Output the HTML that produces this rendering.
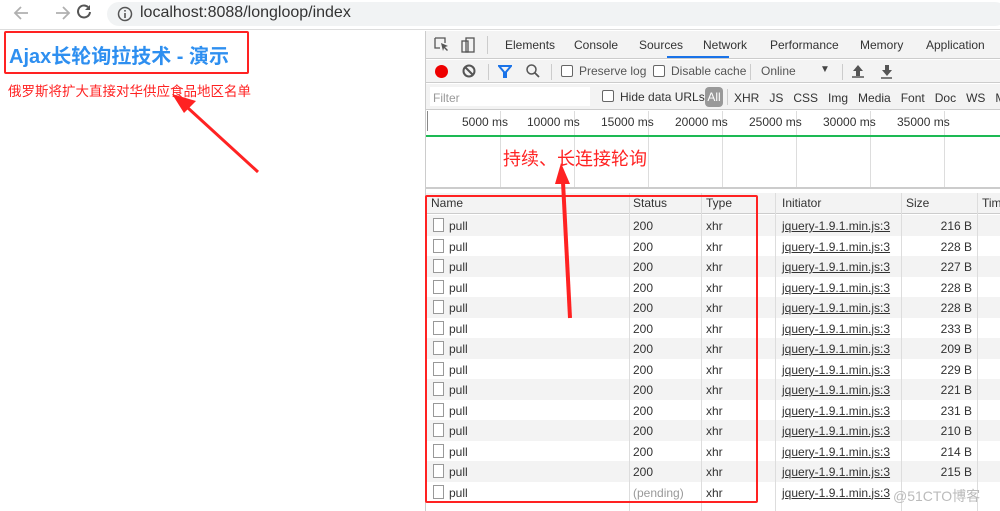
<!DOCTYPE html>
<html><head><meta charset="utf-8"><style>
*{margin:0;padding:0;box-sizing:border-box}
body{width:1000px;height:511px;overflow:hidden;background:#fff;font-family:"Liberation Sans","Noto Sans CJK SC",sans-serif;position:relative}
.a{position:absolute;white-space:nowrap}
.dt{font-size:12px;color:#333}
.row{position:absolute;left:427px;width:573px;height:20.5px;font-size:12px;color:#333}
.row.g{background:#f3f3f3}
.row span{position:absolute;top:4px}
.vl{position:absolute;width:1px;background:#ddd}
</style></head><body>
<div class="a" style="left:0;top:0;width:1000px;height:30px;background:#fff;border-bottom:1px solid #ddd"></div>
<svg class="a" style="left:12px;top:4px" width="80" height="18" viewBox="0 0 80 18">
<path d="M16 9H3M9 3L3 9l6 6" stroke="#b0b0b0" stroke-width="1.8" fill="none"/>
<path d="M44 9h13M51 3l6 6-6 6" stroke="#b0b0b0" stroke-width="1.8" fill="none"/>
<path d="M78 8a6 6 0 1 1-2-5" stroke="#555" stroke-width="2" fill="none"/><path d="M78 1v5h-5z" fill="#555"/>
</svg>
<div class="a" style="left:107px;top:2px;width:900px;height:24px;border-radius:12px;background:#f1f3f4"></div>
<svg class="a" style="left:117px;top:6px" width="16" height="16"><circle cx="8" cy="8" r="6.5" stroke="#555" stroke-width="1.5" fill="none"/><rect x="7.2" y="7" width="1.6" height="5" fill="#555"/><rect x="7.2" y="4" width="1.6" height="1.6" fill="#555"/></svg>
<div class="a" style="left:140px;top:4px;font-size:16px;color:#333">localhost:8088/longloop/index</div>

<div class="a" style="left:4px;top:31px;width:245px;height:43px;border:2px solid #f22;border-radius:2px"></div>
<div class="a" style="left:9px;top:40px;font-size:20px;font-weight:bold;color:#2e8ff0">Ajax长轮询拉技术 - 演示</div>
<div class="a" style="left:8px;top:80px;font-size:13.5px;color:#f22">俄罗斯将扩大直接对华供应食品地区名单</div>

<div class="a" style="left:425px;top:31px;width:575px;height:480px;background:#fff;border-left:1px solid #ccc"></div>
<div class="a" style="left:426px;top:31px;width:574px;height:28px;background:#f3f3f3;border-bottom:1px solid #ccc"></div>
<svg class="a" style="left:434px;top:37px" width="50" height="16"><path d="M1 1h10v5M1 1v10h5" stroke="#555" fill="none" stroke-width="1.3"/><path d="M7 6l7 3-3 1 3 3-1 1-3-3-1 3z" fill="#555"/><rect x="28" y="4" width="6" height="11" stroke="#555" fill="none" stroke-width="1.3"/><rect x="32" y="1" width="8" height="14" stroke="#555" fill="none" stroke-width="1.3"/></svg>
<div class="vl" style="left:487px;top:36px;height:18px;background:#ccc"></div>
<div class="a dt" style="left:505px;top:38px">Elements</div>
<div class="a dt" style="left:574px;top:38px">Console</div>
<div class="a dt" style="left:639px;top:38px">Sources</div>
<div class="a dt" style="left:703px;top:38px">Network</div>
<div class="a" style="left:667px;top:56px;width:62px;height:2px;background:#1a73e8"></div>
<div class="a dt" style="left:770px;top:38px">Performance</div>
<div class="a dt" style="left:860px;top:38px">Memory</div>
<div class="a dt" style="left:926px;top:38px">Application</div>

<div class="a" style="left:426px;top:60px;width:574px;height:23px;background:#f3f3f3;border-bottom:1px solid #ccc"></div>
<div class="a" style="left:435px;top:65px;width:13px;height:13px;border-radius:50%;background:#e00"></div>
<svg class="a" style="left:462px;top:64px" width="14" height="14"><circle cx="7" cy="7" r="5.5" stroke="#555" stroke-width="2" fill="none"/><path d="M3 3l8 8" stroke="#555" stroke-width="2"/></svg>
<div class="vl" style="left:488px;top:64px;height:16px;background:#ccc"></div>
<svg class="a" style="left:498px;top:65px" width="14" height="13"><path d="M1 1h12L8 7v5H6V7z" stroke="#1a73e8" stroke-width="2" fill="none"/></svg>
<svg class="a" style="left:526px;top:64px" width="14" height="14"><circle cx="5.5" cy="5.5" r="4.5" stroke="#555" stroke-width="1.5" fill="none"/><path d="M9 9l4 4" stroke="#555" stroke-width="1.8"/></svg>
<div class="vl" style="left:551px;top:64px;height:16px;background:#ccc"></div>
<div class="a" style="left:561px;top:65px;width:12px;height:12px;border:1px solid #666;border-radius:2px;background:#fff"></div>
<div class="a dt" style="left:579px;top:64px;color:#555">Preserve log</div>
<div class="a" style="left:653px;top:65px;width:12px;height:12px;border:1px solid #666;border-radius:2px;background:#fff"></div>
<div class="a dt" style="left:671px;top:64px;color:#555">Disable cache</div>
<div class="vl" style="left:750px;top:64px;height:16px;background:#ccc"></div>
<div class="a dt" style="left:761px;top:64px;color:#555">Online</div>
<div class="a" style="left:820px;top:64px;font-size:10px;color:#444">▼</div>
<div class="vl" style="left:842px;top:64px;height:16px;background:#ccc"></div>
<svg class="a" style="left:852px;top:63px" width="40" height="16"><path d="M6 2l-5 6h3v5h4V8h3z" fill="#555"/><path d="M0 14h12" stroke="#555" stroke-width="1.5"/><path d="M33 2v5h-3l5 6 5-6h-3V2z" fill="#555"/><path d="M29 15h12" stroke="#555" stroke-width="1.5"/></svg>

<div class="a" style="left:426px;top:84px;width:574px;height:26px;background:#f3f3f3;border-bottom:1px solid #ccc"></div>
<div class="a" style="left:430px;top:87px;width:160px;height:19px;background:#fff"></div>
<div class="a dt" style="left:433px;top:91px;color:#999">Filter</div>
<div class="a" style="left:602px;top:90px;width:12px;height:12px;border:1px solid #666;border-radius:2px;background:#fff"></div>
<div class="a dt" style="left:620px;top:90px">Hide data URLs</div>
<div class="a" style="left:705px;top:87px;width:18px;height:20px;border-radius:4px;background:#999;color:#fff;font-size:12px;text-align:center;line-height:20px">All</div>
<div class="vl" style="left:727px;top:89px;height:16px;background:#ccc"></div>
<div class="a dt" style="left:734px;top:91px">XHR&nbsp;&nbsp; JS&nbsp;&nbsp; CSS&nbsp;&nbsp; Img&nbsp;&nbsp; Media&nbsp;&nbsp; Font&nbsp;&nbsp; Doc&nbsp;&nbsp; WS&nbsp;&nbsp; Man</div>

<div class="vl" style="left:427px;top:111px;height:20px;background:#888"></div>
<div class="vl" style="left:500px;top:111px;height:77px"></div>
<div class="vl" style="left:574px;top:111px;height:77px"></div>
<div class="vl" style="left:648px;top:111px;height:77px"></div>
<div class="vl" style="left:722px;top:111px;height:77px"></div>
<div class="vl" style="left:796px;top:111px;height:77px"></div>
<div class="vl" style="left:870px;top:111px;height:77px"></div>
<div class="vl" style="left:944px;top:111px;height:77px"></div>
<div class="a dt" style="left:462px;top:115px">5000 ms</div>
<div class="a dt" style="left:527px;top:115px">10000 ms</div>
<div class="a dt" style="left:601px;top:115px">15000 ms</div>
<div class="a dt" style="left:675px;top:115px">20000 ms</div>
<div class="a dt" style="left:749px;top:115px">25000 ms</div>
<div class="a dt" style="left:823px;top:115px">30000 ms</div>
<div class="a dt" style="left:897px;top:115px">35000 ms</div>
<div class="a" style="left:426px;top:135px;width:574px;height:2px;background:#1db954"></div>
<div class="a" style="left:426px;top:187px;width:574px;height:2px;background:#ccc"></div>
<div class="a" style="left:503px;top:145px;font-size:18px;color:#f22">持续、长连接轮询</div>

<div class="a" style="left:426px;top:193px;width:574px;height:21px;background:#f3f3f3;border-bottom:1px solid #ccc"></div>
<div class="a dt" style="left:431px;top:196px">Name</div>
<div class="a dt" style="left:633px;top:196px">Status</div>
<div class="a dt" style="left:706px;top:196px">Type</div>
<div class="a dt" style="left:782px;top:196px">Initiator</div>
<div class="a dt" style="left:906px;top:196px">Size</div>
<div class="a dt" style="left:982px;top:196px">Tim</div>

<div id="rows"></div>
<script>
var s=["216","228","227","228","228","233","209","229","221","231","210","214","215",""];
var h="";
for(var i=0;i<14;i++){
 var t=215+i*20.5;
 h+='<div class="row'+(i%2==0?' g':'')+'" style="top:'+t+'px">'+
 '<span style="left:6px;top:3px;width:11px;height:14px;border:1px solid #999;background:#fff"></span>'+
 '<span style="left:22px">pull</span>'+
 (i<13?'<span style="left:206px">200</span>':'<span style="left:206px;color:#999">(pending)</span>')+
 '<span style="left:279px">xhr</span>'+
 '<span style="left:355px;text-decoration:underline">jquery-1.9.1.min.js:3</span>'+
 (s[i]?'<span style="right:28px">'+s[i]+' B</span>':'')+'</div>';
}
document.getElementById('rows').outerHTML=h;
</script>
<div class="vl" style="left:629px;top:193px;height:318px"></div>
<div class="vl" style="left:701px;top:193px;height:318px"></div>
<div class="vl" style="left:775px;top:193px;height:318px"></div>
<div class="vl" style="left:901px;top:193px;height:318px"></div>
<div class="vl" style="left:977px;top:193px;height:318px"></div>

<div class="a" style="left:425px;top:195px;width:333px;height:308px;border:2px solid #f22;border-radius:2px"></div>

<svg class="a" style="left:0;top:0" width="1000" height="511">
<path d="M258 172L188 108" stroke="#f22" stroke-width="3"/>
<path d="M172 94L196 101 184 113z" fill="#f22"/>
<path d="M570 318L563 182" stroke="#f22" stroke-width="4"/>
<path d="M561 163L570 184 555 184z" fill="#f22"/>
</svg>
<div class="a" style="left:893px;top:486px;font-size:14px;color:#bbb">@51CTO博客</div>
</body></html>
